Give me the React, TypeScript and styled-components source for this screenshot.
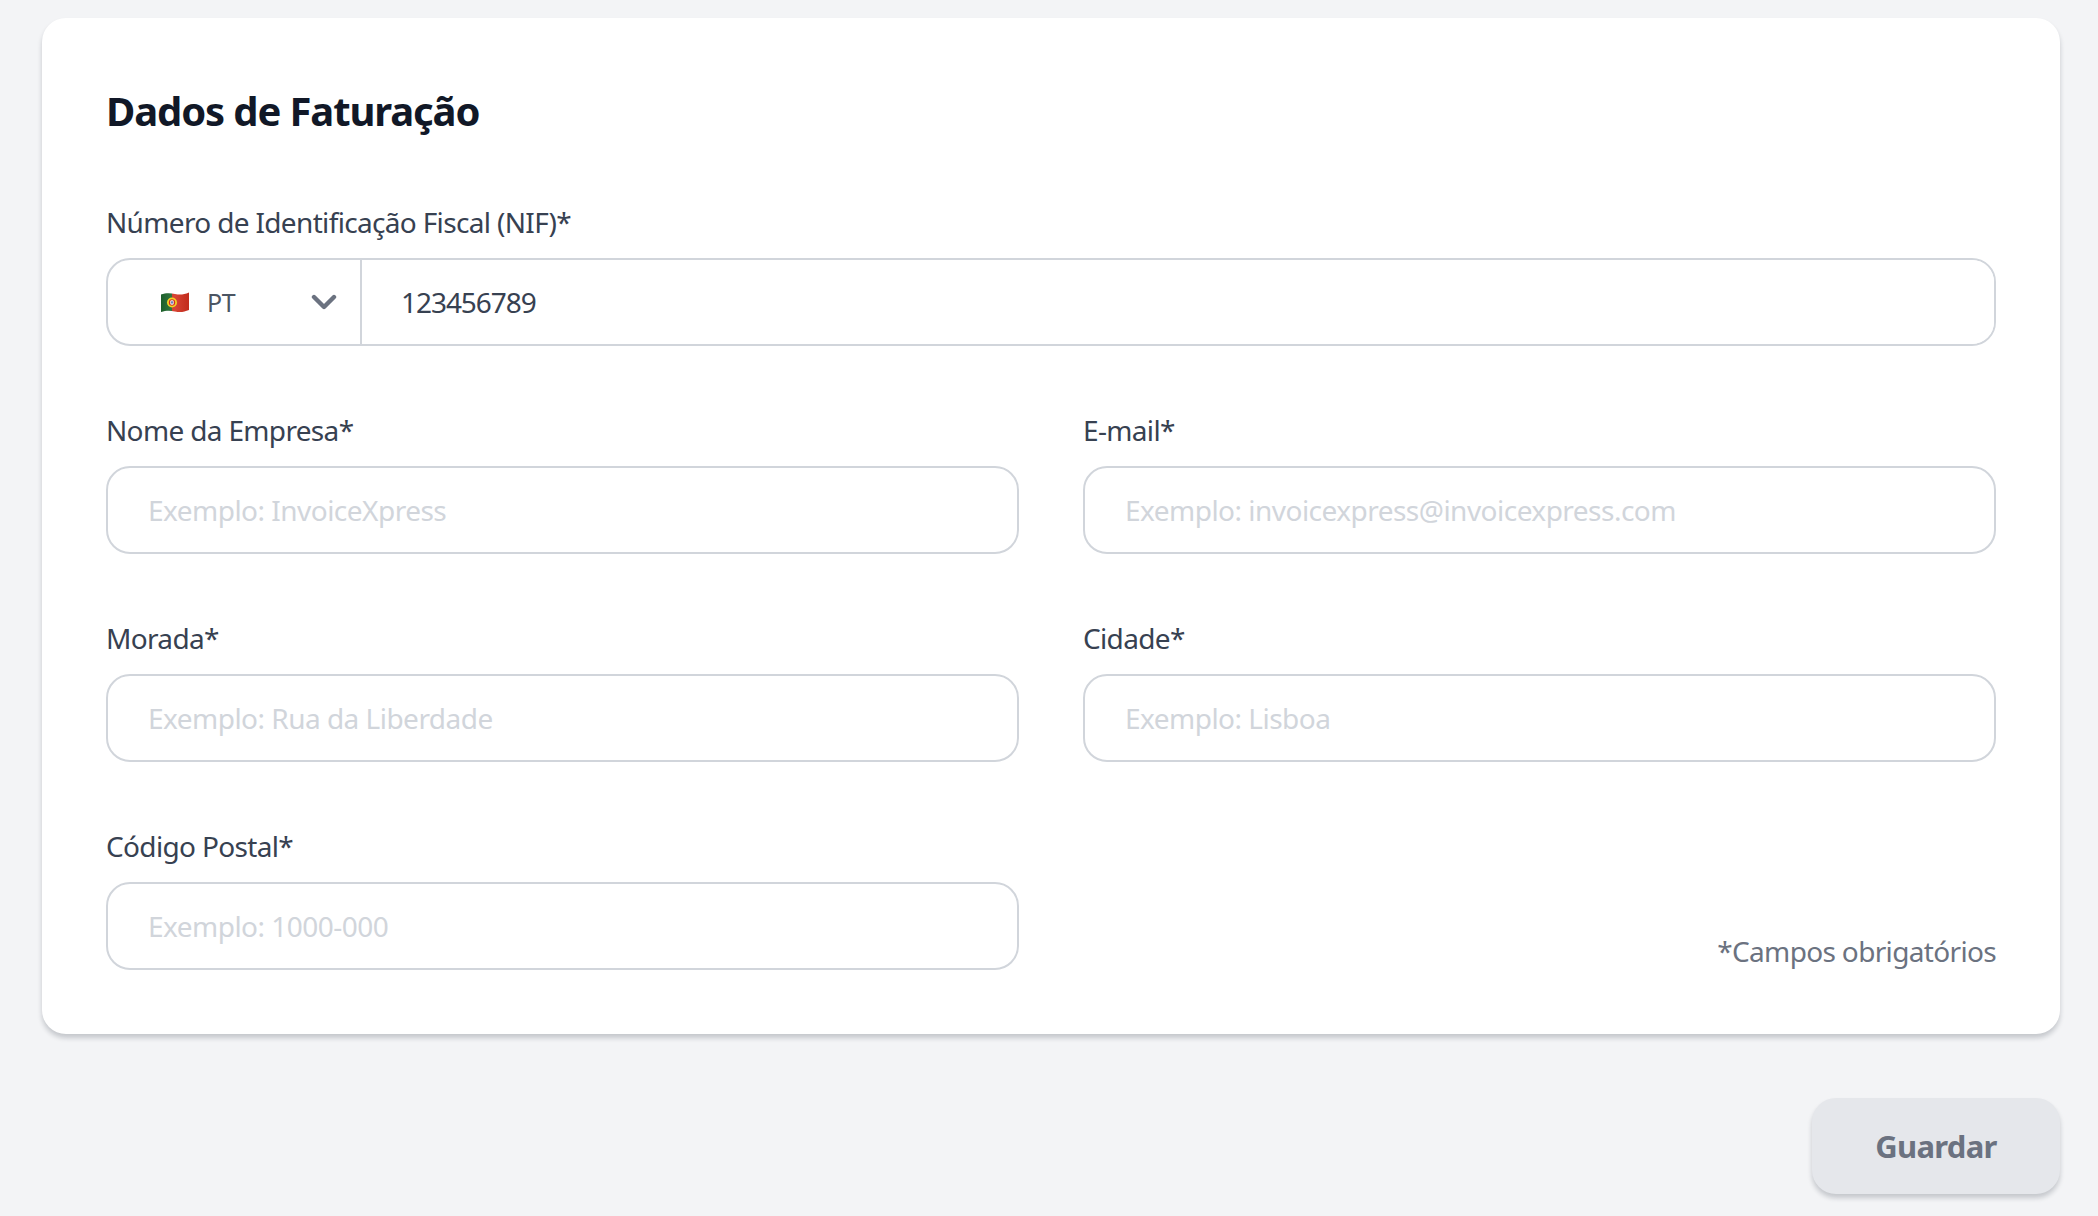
import styled, { createGlobalStyle } from "styled-components";

const GlobalStyle = createGlobalStyle`
  html, body {
    margin: 0;
    padding: 0;
    background: #f3f4f6;
  }
  * {
    box-sizing: border-box;
  }
`;

const fontStack = `"Noto Sans", "Open Sans", sans-serif`;

const Page = styled.main`
  height: 1216px;
  padding: 18px 38px 0 42px;
  background: #f3f4f6;
  font-family: ${fontStack};
  overflow: hidden;
`;

const Card = styled.section`
  padding: 64px;
  background: #fff;
  border-radius: 24px;
  box-shadow: 0 4px 5px rgba(17, 24, 39, 0.2);
`;

const Title = styled.h1`
  margin: 0 0 63px;
  height: 58px;
  font-size: 40px;
  line-height: 58px;
  font-weight: 700;
  letter-spacing: -1.12px;
  color: #111827;
`;

const Grid = styled.div`
  display: grid;
  grid-template-columns: 1fr 1fr;
  column-gap: 64px;
  row-gap: 65px;
`;

const Field = styled.div<{ $wide?: boolean }>`
  display: flex;
  flex-direction: column;
  gap: 17px;
  grid-column: ${(p) => (p.$wide ? "1 / -1" : "auto")};
`;

const Label = styled.label`
  height: 38px;
  font-size: 28px;
  line-height: 38px;
  letter-spacing: -0.66px;
  color: #374151;
`;

const Input = styled.input`
  width: 100%;
  height: 88px;
  padding: 0 40px;
  border: 2.5px solid #d1d5db;
  border-radius: 24px;
  outline: none;
  background: #fff;
  font-family: ${fontStack};
  font-size: 28px;
  letter-spacing: -0.52px;
  color: #374151;
  &::placeholder {
    color: #d1d5db;
    opacity: 1;
  }
`;

const NifBox = styled.div`
  display: flex;
  height: 88px;
  border: 2.5px solid #d1d5db;
  border-radius: 24px;
  overflow: hidden;
`;

const CountrySelect = styled.div`
  flex: 0 0 254px;
  display: flex;
  align-items: center;
  padding-left: 53px;
  border-right: 2.5px solid #d1d5db;
  font-size: 25px;
  letter-spacing: -0.4px;
  color: #4b5563;
`;

const CountryCode = styled.span`
  margin-left: 18px;
`;

const Chevron = styled.svg`
  margin-left: auto;
  margin-right: 23px;
  width: 26px;
  height: 16px;
  color: #6b7280;
`;

const NifInput = styled(Input)`
  flex: 1;
  height: auto;
  border: 0;
  border-radius: 0;
  padding: 0 39px;
  letter-spacing: -1.05px;
`;

const RequiredNote = styled.div`
  align-self: end;
  text-align: right;
  font-size: 28px;
  line-height: 38px;
  letter-spacing: -0.66px;
  color: #6b7280;
`;

const Actions = styled.div`
  display: flex;
  justify-content: flex-end;
  margin-top: 64px;
`;

const SaveButton = styled.button`
  width: 248px;
  height: 96px;
  border: 0;
  border-radius: 24px;
  background: #e5e7eb;
  box-shadow: 0 4px 5px rgba(17, 24, 39, 0.2);
  font-family: ${fontStack};
  font-size: 31px;
  font-weight: 700;
  letter-spacing: -0.7px;
  color: #6b7280;
`;

const FlagPT = () => (
  <svg width="28" height="21" viewBox="0 0 28 21" aria-hidden="true">
    <defs>
      <clipPath id="wave">
        <path d="M0 2.5C5 .8 9 .8 14 2c5 1.2 9 .6 14-1.5v17.6c-5 2-9 2.6-14 1.4-5-1.2-9-1.2-14 .6z" />
      </clipPath>
      <linearGradient id="shade" x1="0" x2="1" y1="0" y2="0">
        <stop offset="0" stopColor="#000" stopOpacity="0.12" />
        <stop offset="0.5" stopColor="#fff" stopOpacity="0.1" />
        <stop offset="1" stopColor="#000" stopOpacity="0.08" />
      </linearGradient>
    </defs>
    <g clipPath="url(#wave)">
      <rect width="11" height="21" fill="#1f6b2f" />
      <rect x="11" width="17" height="21" fill="#d3301f" />
      <rect width="28" height="21" fill="url(#shade)" />
      <circle cx="11" cy="10.5" r="5" fill="#f2d024" />
      <circle cx="11" cy="10.5" r="3.2" fill="#d3301f" />
      <rect x="9.3" y="8.2" width="3.4" height="4.6" rx="1.4" fill="#f4f4f4" />
      <rect x="10.3" y="9.3" width="1.4" height="2.2" fill="#2a4fa3" />
    </g>
  </svg>
);

const App = () => {
  return (
    <>
      <GlobalStyle />
      <Page>
        <Card>
          <Title>Dados de Faturação</Title>
          <Grid>
            <Field $wide>
              <Label>Número de Identificação Fiscal (NIF)*</Label>
              <NifBox>
                <CountrySelect>
                  <FlagPT />
                  <CountryCode>PT</CountryCode>
                  <Chevron viewBox="0 0 26 16" fill="none">
                    <path
                      d="M3 3l10 10L23 3"
                      stroke="currentColor"
                      strokeWidth="4.4"
                      strokeLinecap="round"
                      strokeLinejoin="round"
                    />
                  </Chevron>
                </CountrySelect>
                <NifInput defaultValue="123456789" />
              </NifBox>
            </Field>
            <Field>
              <Label>Nome da Empresa*</Label>
              <Input placeholder="Exemplo: InvoiceXpress" />
            </Field>
            <Field>
              <Label>E-mail*</Label>
              <Input placeholder="Exemplo: invoicexpress@invoicexpress.com" />
            </Field>
            <Field>
              <Label>Morada*</Label>
              <Input placeholder="Exemplo: Rua da Liberdade" />
            </Field>
            <Field>
              <Label>Cidade*</Label>
              <Input placeholder="Exemplo: Lisboa" />
            </Field>
            <Field>
              <Label>Código Postal*</Label>
              <Input placeholder="Exemplo: 1000-000" />
            </Field>
            <RequiredNote>*Campos obrigatórios</RequiredNote>
          </Grid>
        </Card>
        <Actions>
          <SaveButton>Guardar</SaveButton>
        </Actions>
      </Page>
    </>
  );
};

export default App;
